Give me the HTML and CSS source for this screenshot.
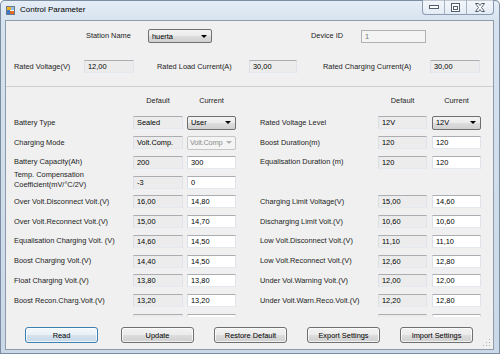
FILE: index.html
```html
<!DOCTYPE html>
<html lang="en">
<head>
    <meta charset="UTF-8">
    <title>Control Parameter</title>
<link rel="stylesheet" href="styles.css">
</head>
<body>

<div class="window">
    <div class="titlebar">
        <svg class="app_icon" width="9" height="9" viewBox="0 0 9 9">
            <rect x="0.5" y="0.5" width="8" height="8" fill="#fff" stroke="#6a7a8c"/>
            <rect x="1" y="1" width="4" height="3" fill="#f2b11c"/>
            <rect x="5" y="1" width="3" height="3" fill="#8fc0ea"/>
            <rect x="1" y="4" width="3" height="4" fill="#3a78c4"/>
            <rect x="4" y="5" width="4" height="3" fill="#e06a2a"/>
        </svg>
        <span class="title">Control Parameter</span>
        <div class="caption_btns">
            <span class="cap">
                <svg width="10" height="5" viewBox="0 0 10 5"><rect x="0.5" y="0.5" width="9" height="3" fill="#fff" stroke="#555f6b"/></svg>
            </span>
            <span class="cap">
                <svg width="9" height="9" viewBox="0 0 9 9"><rect x="0.5" y="0.5" width="8" height="8" fill="#fff" stroke="#555f6b"/><rect x="2.5" y="3.5" width="4" height="3" fill="none" stroke="#555f6b"/></svg>
            </span>
            <span class="cap cap_close">
                <svg width="10" height="9" viewBox="0 0 10 9"><path d="M0.5 0.5h3l1.5 2 1.5-2h3l-3 4 3 4h-3l-1.5-2-1.5 2h-3l3-4z" fill="#fff" stroke="#555f6b" stroke-linejoin="round"/></svg>
            </span>
        </div>
    </div>

    <main class="client">
        <div class="station_row">
            <span class="lbl station_lbl">Station Name</span>
            <div class="combo station_combo"><span class="combo_txt">huerta</span><i class="arrow"></i></div>
            <span class="lbl device_lbl">Device ID</span>
            <div class="tb tb_disabled device_box">1</div>
        </div>

        <div class="rated_row">
            <span class="lbl rv_lbl">Rated Voltage(V)</span>
            <div class="tb tb_ro rv_box">12,00</div>
            <span class="lbl rl_lbl">Rated Load Current(A)</span>
            <div class="tb tb_ro rl_box">30,00</div>
            <span class="lbl rc_lbl">Rated Charging Current(A)</span>
            <div class="tb tb_ro rc_box">30,00</div>
        </div>

        <div class="params">
            <div class="param_grid">
                <span></span><span class="hdr">Default</span><span class="hdr hdr_cur">Current</span>
                <span></span><span class="hdr">Default</span><span class="hdr hdr_cur2">Current</span>

                <span class="lbl">Battery Type</span>
                <div class="tb tb_ro">Sealed</div>
                <div class="cur"><div class="combo"><span class="combo_txt">User</span><i class="arrow"></i></div></div>
                <span class="lbl lbl_r">Rated Voltage Level</span>
                <div class="tb tb_ro">12V</div>
                <div class="cur2"><div class="combo"><span class="combo_txt">12V</span><i class="arrow"></i></div></div>

                <span class="lbl">Charging Mode</span>
                <div class="tb tb_ro">Volt.Comp.</div>
                <div class="cur"><div class="combo combo_disabled"><span class="combo_txt">Volt.Comp</span><i class="arrow"></i></div></div>
                <span class="lbl lbl_r">Boost Duration(m)</span>
                <div class="tb tb_ro">120</div>
                <div class="cur2"><div class="tb">120</div></div>

                <span class="lbl">Battery Capacity(Ah)</span>
                <div class="tb tb_ro">200</div>
                <div class="cur"><div class="tb">300</div></div>
                <span class="lbl lbl_r">Equalisation Duration (m)</span>
                <div class="tb tb_ro">120</div>
                <div class="cur2"><div class="tb">120</div></div>

                <span class="lbl lbl_two">Temp. Compensation<br>Coefficient(mV/°C/2V)</span>
                <div class="tb tb_ro">-3</div>
                <div class="cur"><div class="tb">0</div></div>
                <span></span><span></span><span></span>

                <span class="lbl">Over Volt.Disconnect Volt.(V)</span>
                <div class="tb tb_ro">16,00</div>
                <div class="cur"><div class="tb">14,80</div></div>
                <span class="lbl lbl_r">Charging Limit Voltage(V)</span>
                <div class="tb tb_ro">15,00</div>
                <div class="cur2"><div class="tb">14,60</div></div>

                <span class="lbl">Over Volt.Reconnect Volt.(V)</span>
                <div class="tb tb_ro">15,00</div>
                <div class="cur"><div class="tb">14,70</div></div>
                <span class="lbl lbl_r">Discharging Limit Volt.(V)</span>
                <div class="tb tb_ro">10,60</div>
                <div class="cur2"><div class="tb">10,60</div></div>

                <span class="lbl">Equalisation Charging Volt. (V)</span>
                <div class="tb tb_ro">14,60</div>
                <div class="cur"><div class="tb">14,50</div></div>
                <span class="lbl lbl_r">Low Volt.Disconnect Volt.(V)</span>
                <div class="tb tb_ro">11,10</div>
                <div class="cur2"><div class="tb">11,10</div></div>

                <span class="lbl">Boost Charging Volt.(V)</span>
                <div class="tb tb_ro">14,40</div>
                <div class="cur"><div class="tb">14,50</div></div>
                <span class="lbl lbl_r">Low Volt.Reconnect Volt.(V)</span>
                <div class="tb tb_ro">12,60</div>
                <div class="cur2"><div class="tb">12,80</div></div>

                <span class="lbl">Float Charging Volt.(V)</span>
                <div class="tb tb_ro">13,80</div>
                <div class="cur"><div class="tb">13,80</div></div>
                <span class="lbl lbl_r">Under Vol.Warning Volt.(V)</span>
                <div class="tb tb_ro">12,00</div>
                <div class="cur2"><div class="tb">12,00</div></div>

                <span class="lbl">Boost Recon.Charg.Volt.(V)</span>
                <div class="tb tb_ro">13,20</div>
                <div class="cur"><div class="tb">13,20</div></div>
                <span class="lbl lbl_r">Under Volt.Warn.Reco.Volt.(V)</span>
                <div class="tb tb_ro">12,20</div>
                <div class="cur2"><div class="tb">12,80</div></div>

                <span></span>
                <div class="tb tb_ro"></div>
                <div class="cur"><div class="tb"></div></div>
                <span></span>
                <div class="tb tb_ro"></div>
                <div class="cur2"><div class="tb"></div></div>
            </div>
        </div>

        <div class="btn_row">
            <button class="btn btn_default">Read</button>
            <button class="btn">Update</button>
            <button class="btn">Restore Default</button>
            <button class="btn">Export Settings</button>
            <button class="btn">Import Settings</button>
        </div>

        <svg class="grip" width="8" height="8" viewBox="0 0 8 8">
            <rect x="6" y="0" width="1" height="1" fill="#b4b4b4"/>
            <rect x="3" y="3" width="1" height="1" fill="#b4b4b4"/>
            <rect x="6" y="3" width="1" height="1" fill="#b4b4b4"/>
            <rect x="0" y="6" width="1" height="1" fill="#b4b4b4"/>
            <rect x="3" y="6" width="1" height="1" fill="#b4b4b4"/>
            <rect x="6" y="6" width="1" height="1" fill="#b4b4b4"/>
        </svg>
    </main>
</div>

</body>
</html>
```

FILE: styles.css
```css
body {
  margin: 0;
  background: #fff;
  font-family: 'Liberation Sans', Arial, sans-serif;
  font-size: 7.4px;
  color: #222;
}

.window {
  width: 500px;
  height: 354px;
  box-sizing: border-box;
  display: flex;
  flex-direction: column;
  background: linear-gradient(180deg, #e6eef7 0px, #d6e2ef 22px, #cbd8e7 100%);
  box-shadow: inset 0 0 0 1px #7d8da1;
  border-radius: 5px 5px 0 0;
}

/* title bar */

.titlebar {
  height: 20px;
  display: flex;
  align-items: flex-start;
  padding-left: 6px;
}

.app_icon {
  margin-top: 6px;
}

.title {
  margin-left: 5px;
  margin-top: 4px;
  font-size: 8px;
  line-height: 12px;
  color: #000;
}

.caption_btns {
  margin-left: auto;
  margin-right: 6px;
  display: flex;
  height: 14px;
  border: 1px solid #8a9ab0;
  border-top: none;
  border-radius: 0 0 4px 4px;
  background: linear-gradient(180deg, rgba(255, 255, 255, 0.55), rgba(255, 255, 255, 0.2));
  overflow: hidden;
}

.cap {
  width: 21px;
  display: flex;
  align-items: center;
  justify-content: center;
  border-right: 1px solid #a3b1c3;
}

.cap_close {
  width: 26px;
  border-right: none;
}

/* client area */

.client {
  position: relative;
  flex: 1;
  margin: 0 6px 4px 5px;
  background: #f0f0f0;
  border: 1px solid #8e9bab;
  display: flex;
  flex-direction: column;
}

.lbl {
  line-height: 10px;
  white-space: nowrap;
}

.tb {
  height: 13px;
  box-sizing: border-box;
  border: 1px solid;
  border-color: #abadb3 #e2e3ea #e3e9ef #dbdfe6;
  background: #fff;
  padding-left: 3px;
  line-height: 11px;
  color: #000;
  white-space: nowrap;
  overflow: hidden;
}

.tb_ro {
  background: #ececec;
}

.tb_disabled {
  background: #f4f4f4;
  border-color: #adb2b5;
  color: #777;
}

.combo {
  height: 14px;
  box-sizing: border-box;
  border: 1px solid #707070;
  border-radius: 2px;
  background: linear-gradient(180deg, #f3f3f3 0%, #ebebeb 50%, #dddddd 51%, #d0d0d0 100%);
  padding-left: 3px;
  display: flex;
  align-items: center;
  color: #000;
}

.combo_txt {
  flex: 1;
  overflow: hidden;
  white-space: nowrap;
}

.arrow {
  flex: none;
  width: 0;
  height: 0;
  margin: 0 4px 0 2px;
  border-left: 3px solid transparent;
  border-right: 3px solid transparent;
  border-top: 3px solid #000;
}

.combo_disabled {
  padding-left: 2px;
  border-color: #c5c5c5;
  background: #f4f4f4;
  color: #8d8d8d;
  letter-spacing: -0.2px;
}

.combo_disabled .arrow {
  margin: 0 3px 0 1px;
  border-top-color: #b0b0b0;
}

/* top rows */

.station_row {
  margin-top: 8px;
  height: 14px;
  display: flex;
  align-items: center;
}

.station_lbl {
  width: 62px;
  padding-left: 80px;
}

.station_combo {
  width: 64px;
}

.device_lbl {
  width: 50px;
  padding-left: 99px;
}

.device_box {
  width: 65px;
}

.rated_row {
  margin-top: 17px;
  height: 13px;
  display: flex;
  align-items: center;
}

.rv_lbl {
  width: 70px;
  padding-left: 8px;
}

.rv_box {
  width: 50px;
}

.rl_lbl {
  width: 92px;
  padding-left: 23px;
}

.rl_box {
  width: 48px;
}

.rc_lbl {
  width: 107px;
  padding-left: 26px;
}

.rc_box {
  width: 50px;
}

/* parameter panel */

.params {
  margin-top: 13px;
  height: 231px;
  box-sizing: border-box;
  border-top: 1px solid #cfcfcf;
  padding-top: 7px;
  overflow: hidden;
}

.param_grid {
  display: grid;
  grid-template-columns: 127px 50px 53px 142px 49px 54px;
  grid-template-rows: 19px;
  grid-auto-rows: 19.75px;
  align-items: center;
}

.param_grid > .lbl {
  padding-left: 8px;
}

.param_grid > .lbl_r {
  padding-left: 24px;
}

.lbl_two {
  align-self: start;
  margin-top: -2px;
}

.hdr {
  align-self: start;
  line-height: 14px;
  text-align: center;
}

.hdr_cur {
  padding-left: 4px;
}

.hdr_cur2 {
  padding-left: 5px;
}

.cur {
  padding-left: 4px;
}

.cur2 {
  padding-left: 5px;
}

/* buttons */

.btn_row {
  margin-top: 10px;
  padding-left: 19px;
  display: flex;
  gap: 20px;
}

.btn {
  width: 73px;
  height: 16px;
  padding: 0;
  font-family: 'Liberation Sans', Arial, sans-serif;
  font-size: 7.4px;
  color: #000;
  border: 1px solid #707070;
  border-radius: 3px;
  background: linear-gradient(180deg, #f2f2f2 0%, #ebebeb 50%, #dddddd 51%, #cfcfcf 100%);
  box-shadow: inset 0 0 0 1px rgba(255, 255, 255, 0.7);
}

.btn_default {
  margin-right: 3px;
  border-color: #3c7fb1;
  background: linear-gradient(180deg, #f4f8fb 0%, #e8f0f6 50%, #d6e3ee 51%, #c8d8e6 100%);
}

.grip {
  position: absolute;
  right: 2px;
  bottom: 2px;
}
```
